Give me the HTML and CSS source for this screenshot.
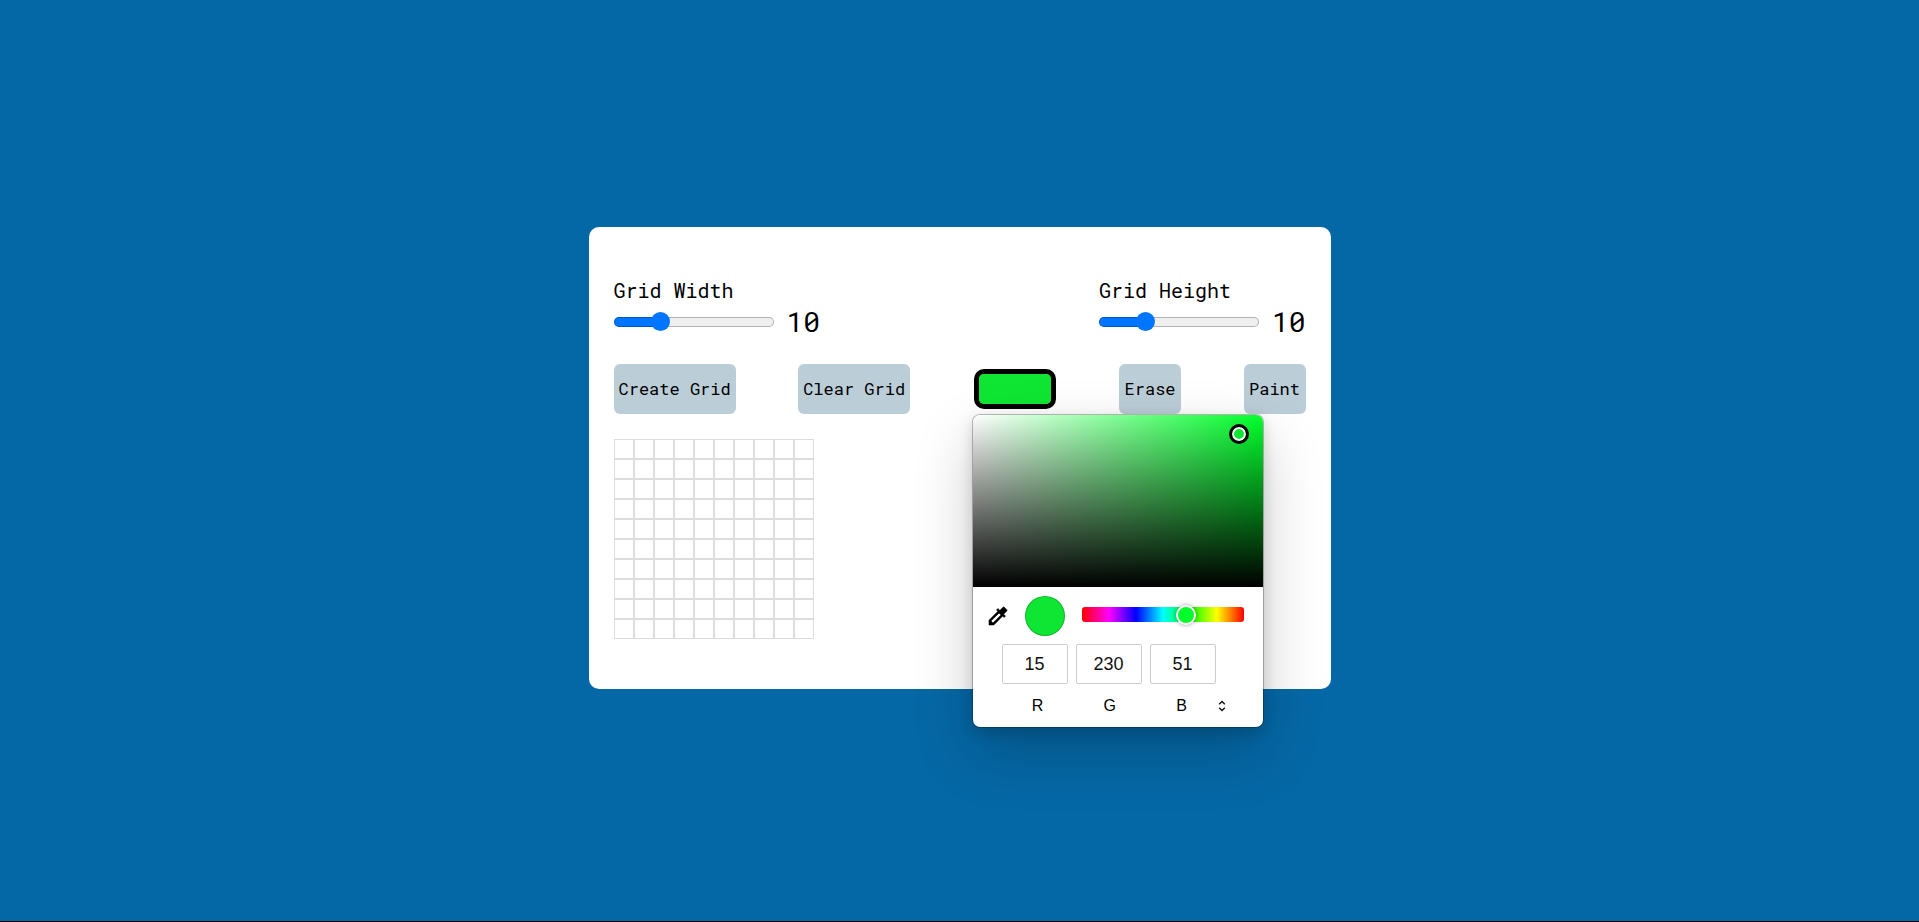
FILE: index.html
```
<!DOCTYPE html>
<html lang="en">
<head>
<meta charset="utf-8">
<meta name="viewport" content="width=device-width, initial-scale=1">
<title>Grid Painter</title>
<link rel="stylesheet" href="styles.css">
</head>
<body>
<main class="wrapper">
  <section class="sizes">
    <div class="size">
      <label for="width-range">Grid Width</label>
      <div class="range-row">
        <input type="range" id="width-range" min="1" max="35" value="10">
        <output class="value" for="width-range">10</output>
      </div>
    </div>
    <div class="size">
      <label for="height-range">Grid Height</label>
      <div class="range-row">
        <input type="range" id="height-range" min="1" max="35" value="10">
        <output class="value" for="height-range">10</output>
      </div>
    </div>
  </section>
  <section class="tools">
    <button class="tool" type="button">Create Grid</button>
    <button class="tool" type="button">Clear Grid</button>
    <div class="color-field">
      <input class="color" type="color" value="#0fe633" aria-label="Paint color">
      <div class="picker">
        <div class="shade"><span class="shade-handle"></span></div>
        <div class="hue-row">
          <button class="dropper" type="button" aria-label="Pick a color from the screen">
            <svg width="24" height="24" viewBox="0 0 24 24" stroke="#000" stroke-width=".6" aria-hidden="true"><path d="M20.71 5.63l-2.34-2.34a1 1 0 0 0-1.41 0l-3.12 3.12-1.93-1.91-1.41 1.41 1.42 1.42L3 16.25V21h4.75l8.92-8.92 1.42 1.42 1.41-1.41-1.92-1.92 3.12-3.12a1 1 0 0 0 .01-1.42zM6.92 19L5 17.08l8.06-8.06 1.92 1.92L6.92 19z"/></svg>
          </button>
          <span class="current"></span>
          <input class="hue" type="range" min="0" max="360" value="238" aria-label="Hue">
        </div>
        <div class="channels">
          <input id="red" type="text" value="15">
          <input id="green" type="text" value="230">
          <input id="blue" type="text" value="51">
        </div>
        <div class="channel-names">
          <label for="red">R</label>
          <label for="green">G</label>
          <label for="blue">B</label>
          <button class="format" type="button" aria-label="Change color format">
            <svg width="8" height="12" viewBox="0 0 8 12" fill="none" stroke="#111" stroke-width="1.4" aria-hidden="true"><path d="M1.2 4.2L4 1.4l2.8 2.8M1.2 7.8L4 10.6l2.8-2.8"/></svg>
          </button>
        </div>
      </div>
    </div>
    <button class="tool" type="button">Erase</button>
    <button class="tool" type="button">Paint</button>
  </section>
  <section class="grid" id="grid" aria-label="Drawing grid"></section>
</main>
<script src="script.js"></script>
</body>
</html>
```
FILE: styles.css
```
* { box-sizing: border-box; margin: 0; padding: 0; }

body {
  min-height: 100vh;
  display: flex;
  align-items: center;
  justify-content: center;
  padding-bottom: 5px;
  background: #0568a6;
  border-bottom: 1px solid #000;
  color: #000;
}

.wrapper, .tool {
  font-family: "Roboto Mono", "DejaVu Sans Mono", monospace;
}

.wrapper {
  display: flex;
  flex-direction: column;
  gap: 24px;
  width: 90%;
  max-width: 742px;
  padding: 50px 25px;
  background: #fff;
  border-radius: 10px;
}

.sizes, .tools {
  display: flex;
  align-items: center;
  justify-content: space-between;
}

.size label { display: block; font-size: 20px; line-height: 27px; }
.range-row { display: flex; align-items: center; gap: 13px; }
.range-row input {
  --fill: 29%;
  appearance: none;
  width: 160px;
  height: 20px;
  background: none;
}
.range-row input::-webkit-slider-runnable-track {
  height: 10px;
  border-radius: 5px;
  background: linear-gradient(to right, #0075ff var(--fill), #efefef var(--fill));
  box-shadow: inset 0 0 0 1px rgba(0, 0, 0, .25);
}
.range-row input::-webkit-slider-thumb {
  appearance: none;
  width: 19px;
  height: 19px;
  margin-top: -5px;
  border-radius: 50%;
  background: #0075ff;
}
.value { font-size: 28px; line-height: 36px; }

.tool {
  min-width: 62px;
  height: 50px;
  padding: 0 5px 2px;
  border: 0;
  border-radius: 6px;
  background: #bbcdd7;
  color: #000;
  font-size: 17px;
}

.color-field { position: relative; display: flex; margin: 0 1px; }
.color {
  appearance: none;
  width: 82px;
  height: 40px;
  border: 5px solid #000;
  border-radius: 10px;
  background: #0fe633;
  overflow: hidden;
}
.color::-webkit-color-swatch-wrapper { padding: 0; }
.color::-webkit-color-swatch { border: 0; border-radius: 4px; }

.picker {
  position: absolute;
  z-index: 1;
  top: 45px;
  left: -2px;
  width: 292px;
  overflow: hidden;
  border: 1px solid rgba(0, 0, 0, .25);
  border-radius: 8px;
  background: #fff;
  background-clip: padding-box;
  box-shadow: 0 5px 14px rgba(0, 0, 0, .14), 0 25px 60px rgba(0, 0, 0, .2);
  font-family: "Liberation Sans", Arial, sans-serif;
}

.shade {
  position: relative;
  height: 172px;
  background: linear-gradient(to top, #000, transparent), linear-gradient(to right, #fff, #00ff2a);
}
.shade-handle {
  position: absolute;
  top: 11%;
  left: 92%;
  width: 20px;
  height: 20px;
  transform: translate(-50%, -50%);
  border: 3px solid #000;
  border-radius: 50%;
  background: #0fe633;
  box-shadow: inset 0 0 0 2px #fff;
}

.hue-row {
  display: flex;
  align-items: center;
  padding: 9px 19px 8px 13px;
}
.dropper, .format { border: 0; background: none; line-height: 0; }
.current {
  width: 40px;
  height: 40px;
  margin: 0 17px 0 15px;
  border: 1px solid rgba(0, 0, 0, .2);
  border-radius: 50%;
  background: #0fe633;
}
.hue {
  appearance: none;
  flex: 1;
  min-width: 0;
  height: 15px;
  margin-bottom: 3px;
  border-radius: 3px;
  background: linear-gradient(to right, #f00, #f0f, #00f, #0ff, #0f0, #ff0, #f00);
}
.hue::-webkit-slider-thumb {
  appearance: none;
  width: 20px;
  height: 20px;
  border: 2px solid #fff;
  border-radius: 50%;
  background: #00ff2a;
  box-shadow: 0 0 4px rgba(0, 0, 0, .4);
}

.channels { display: flex; gap: 8px; padding: 0 29px; }
.channels input {
  width: 66px;
  height: 40px;
  border: 1px solid #ccc;
  border-radius: 2px;
  color: #111;
  font: 18px "Liberation Sans", Arial, sans-serif;
  text-align: center;
}
.channel-names { display: flex; align-items: center; padding: 0 29px; }
.channel-names label {
  width: 72px;
  font-size: 16px;
  line-height: 43px;
  text-align: center;
}

.grid { margin-top: 1px; }
.row { display: flex; }
.cell { width: 20px; height: 20px; border: 1px solid #ddd; }
```
FILE: script.js
```
const grid = document.getElementById("grid");
for (let y = 0; y < 10; y++) {
  const row = document.createElement("div");
  row.className = "row";
  for (let x = 0; x < 10; x++) {
    const cell = document.createElement("div");
    cell.className = "cell";
    row.append(cell);
  }
  grid.append(row);
}

for (const range of document.querySelectorAll(".range-row input")) {
  range.addEventListener("input", () => {
    const share = (range.value - range.min) / (range.max - range.min);
    range.style.setProperty("--fill", `${6 + share * 88}%`);
    range.nextElementSibling.value = range.value;
  });
}
```
